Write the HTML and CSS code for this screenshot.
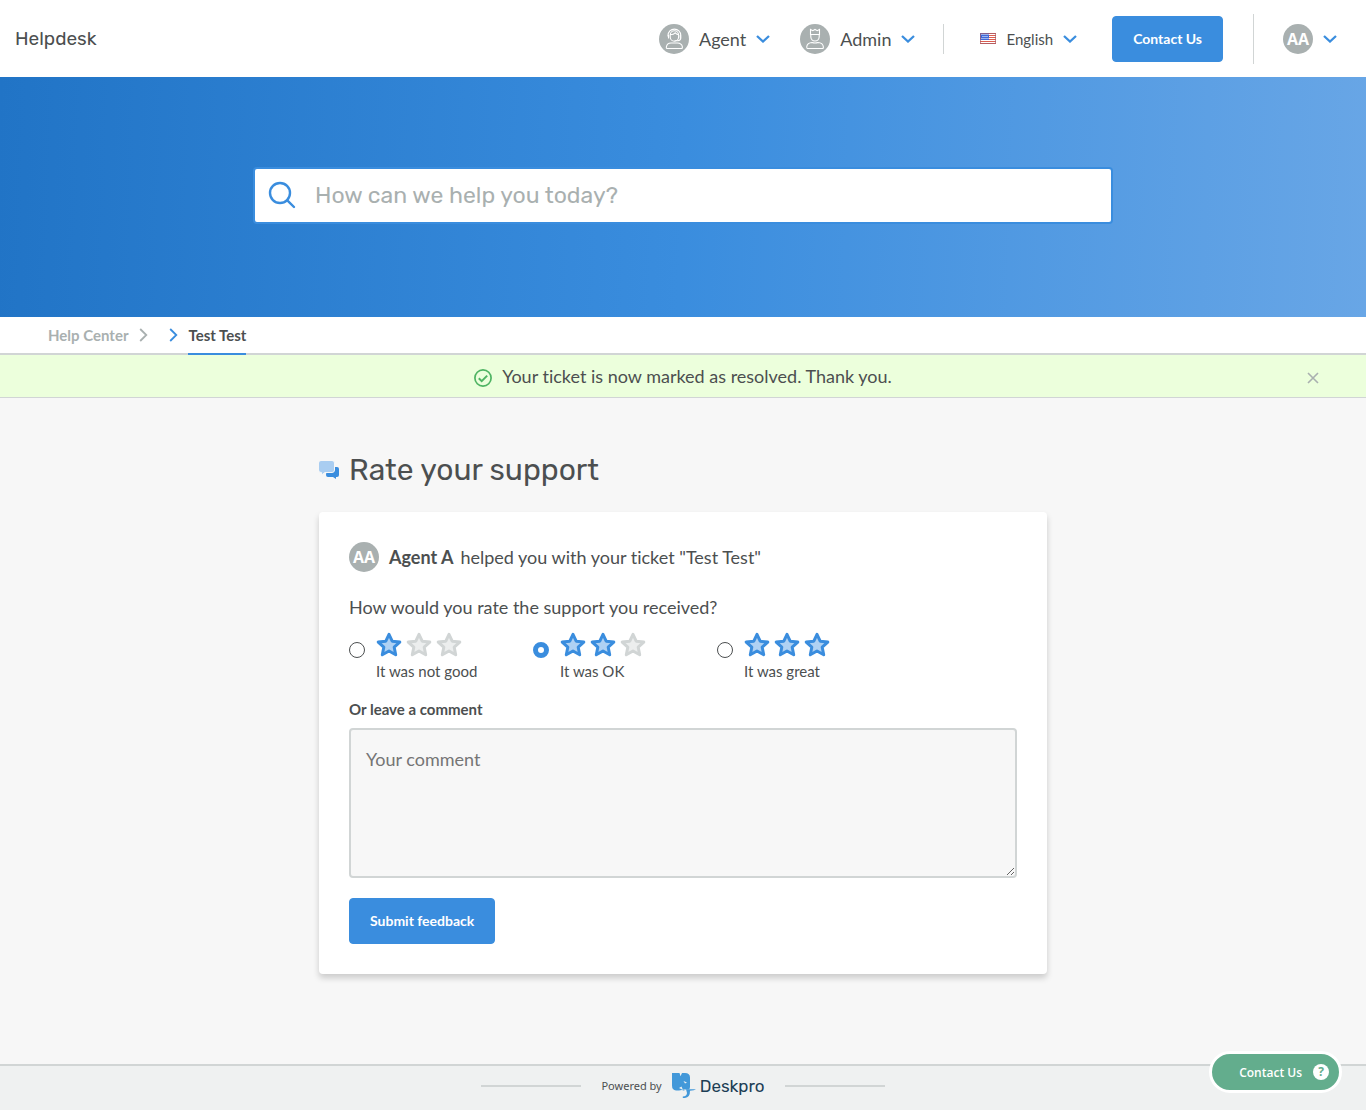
FILE: index.html
```html
<!DOCTYPE html>
<html lang="en">
<head>
<meta charset="utf-8">
<meta name="viewport" content="width=device-width, initial-scale=1">
<title>Helpdesk</title>
<link rel="stylesheet" href="styles.css">
</head>
<body>
<svg class="sprite" aria-hidden="true">
  <symbol id="chevron-down" viewBox="0 0 14 8"><path d="M1 1 7 6.500 13 1" fill="none" stroke="currentColor" stroke-width="2.300"/></symbol>
  <symbol id="chevron-right" viewBox="0 0 9 14"><path d="M1.200 1 7.300 7l-6.100 6" fill="none" stroke="currentColor" stroke-width="1.800"/></symbol>
  <symbol id="star" viewBox="0 0 26 26"><path d="M13 2.300 16.200 9.200l7.600.9-5.600 5.100 1.500 7.500L13 19l-6.700 3.700 1.500-7.500-5.600-5.100 7.600-.9z" stroke-width="3" stroke-linejoin="round"/></symbol>
</svg>

<header class="topbar">
  <a class="brand" href="#">Helpdesk</a>
  <nav class="menu">
    <button class="menu-item" type="button">
      <svg class="role-icon" viewBox="0 0 30 30" aria-hidden="true"><circle cx="15" cy="15" r="15" fill="#a9b0b0"/><g fill="none" stroke="#fff" stroke-width="1.100"><path d="M9 12.500V11.500a6.400 6.400 0 0 1 12.800 0V14q0 2.400-3 2.700h-3.300"/><path d="M11.200 13V11a4.200 4.200 0 0 1 8.400 0v2a4.200 4.200 0 0 1-8.400 0zM11.200 10.800q3.600-.300 5-2 1 1.500 3.400 2M9.500 11v3.500M21.300 11v3.500"/><path d="M12 19h6.500q4.200.300 4.800 3.500.2 2-.7 2H8q-1-.2-.5-2.200.7-3 4.500-3.300z"/></g></svg>
      <span>Agent</span>
      <svg class="chevron" aria-hidden="true"><use href="#chevron-down"/></svg>
    </button>
    <button class="menu-item menu-item-admin" type="button">
      <svg class="role-icon" viewBox="0 0 30 30" aria-hidden="true"><circle cx="15" cy="15" r="15" fill="#a9b0b0"/><g fill="none" stroke="#fff" stroke-width="1.100"><path d="M10.500 10.500V5.500l2.300 1.200L15 5.500l2.200 1.200 2.300-1.200v5zM10.800 10.500v2.300a4.200 4.200 0 0 0 8.400 0v-2.300"/><path d="M12 18.500q3 1 6 0 4.700.3 5.300 4 .2 2-.7 2H7.500q-1-.2-.7-2.200.7-3.500 5.200-3.800z"/></g></svg>
      <span>Admin</span>
      <svg class="chevron" aria-hidden="true"><use href="#chevron-down"/></svg>
    </button>
    <span class="divider"></span>
    <button class="menu-item language" type="button">
      <svg class="flag" viewBox="0 0 16 11" aria-hidden="true"><path fill="#fff" d="M0 0h16v11H0z"/><path d="M0 .5h16M0 2.500h16M0 4.500h16M0 6.500h16M0 8.500h16M0 10.500h16" stroke="#dc5e50"/><path fill="#3f68d8" d="M0 0h9v7H0z"/><path d="M1.500 1.500h7M2.500 3.500h6M1.500 5.500h7" stroke="#fff" stroke-dasharray="1 1"/><path fill="none" stroke="#a55d68" stroke-opacity=".7" d="M.5.5h15v10H.5z"/></svg>
      <span>English</span>
      <svg class="chevron" aria-hidden="true"><use href="#chevron-down"/></svg>
    </button>
    <button class="button contact" type="button">Contact Us</button>
    <span class="divider divider-tall"></span>
    <button class="menu-item account" type="button">
      <span class="avatar">AA</span>
      <svg class="chevron" aria-hidden="true"><use href="#chevron-down"/></svg>
    </button>
  </nav>
</header>

<section class="hero">
  <form class="search" role="search">
    <svg class="search-icon" viewBox="0 0 28 28" aria-hidden="true"><g fill="none" stroke="#3a8dde" stroke-width="2.400" stroke-linecap="round"><circle cx="12" cy="12" r="10"/><path d="m19.300 19.300 6.700 6.700"/></g></svg>
    <input class="search-input" type="search" placeholder="How can we help you today?" aria-label="Search">
  </form>
</section>

<nav class="breadcrumbs" aria-label="Breadcrumb">
  <a class="crumb" href="#">Help Center</a>
  <svg class="crumb-arrow" aria-hidden="true"><use href="#chevron-right"/></svg>
  <svg class="crumb-arrow crumb-arrow-active" aria-hidden="true"><use href="#chevron-right"/></svg>
  <a class="crumb crumb-active" href="#" aria-current="page">Test Test</a>
</nav>

<div class="notice" role="status">
  <svg class="notice-icon" viewBox="0 0 18 18" aria-hidden="true"><g fill="none" stroke="#4fb463" stroke-width="1.700"><circle cx="9" cy="9" r="8.100"/><path stroke-width="2" d="m4.800 9.200 2.900 2.900 5.500-5.500"/></g></svg>
  <p class="notice-text">Your ticket is now marked as resolved. Thank you.</p>
  <button class="notice-close" type="button" aria-label="Dismiss"><svg viewBox="0 0 12 12" aria-hidden="true"><path d="m1 1 10 10M11 1 1 11" stroke="#a9b0b0" stroke-width="1.600"/></svg></button>
</div>

<main class="content">
  <h1 class="title">
    <svg class="title-icon" viewBox="0 0 20 18" aria-hidden="true"><path fill="#3a8dde" d="M8 6h10q2 0 2 2v6q0 2-2 2h-1v2l-3-2H9q-2 0-2-2z"/><path fill="#a9cdf1" stroke="#f7f7f7" d="M2-.5h11q2.500 0 2.500 2.500v7q0 2.500-2.500 2.500H6L2.500 14v-2.500H2Q-.5 11.500-.5 9V2Q-.5-.5 2-.5z"/></svg>
    Rate your support
  </h1>
  <form class="card">
    <p class="helper"><span class="avatar">AA</span><strong>Agent A</strong><span>helped you with your ticket "Test Test"</span></p>
    <fieldset class="rating">
      <legend class="question">How would you rate the support you received?</legend>
      <div class="options">
        <label class="option">
          <input class="radio" type="radio" name="rating">
          <span class="option-body"><span class="stars"><svg class="star star-on"><use href="#star"/></svg><svg class="star"><use href="#star"/></svg><svg class="star"><use href="#star"/></svg></span>It was not good</span>
        </label>
        <label class="option">
          <input class="radio" type="radio" name="rating" checked>
          <span class="option-body"><span class="stars"><svg class="star star-on"><use href="#star"/></svg><svg class="star star-on"><use href="#star"/></svg><svg class="star"><use href="#star"/></svg></span>It was OK</span>
        </label>
        <label class="option">
          <input class="radio" type="radio" name="rating">
          <span class="option-body"><span class="stars"><svg class="star star-on"><use href="#star"/></svg><svg class="star star-on"><use href="#star"/></svg><svg class="star star-on"><use href="#star"/></svg></span>It was great</span>
        </label>
      </div>
    </fieldset>
    <label class="comment-label" for="comment">Or leave a comment</label>
    <textarea class="comment" id="comment" placeholder="Your comment"></textarea>
    <button class="button" type="submit">Submit feedback</button>
  </form>
</main>

<footer class="footer">
  <span class="rule"></span>
  <a class="powered" href="#">
    <span class="powered-text">Powered by</span>
    <svg class="logo" viewBox="0 0 24 26" aria-hidden="true"><path fill="#4298d9" d="M0 0h7.500l1 3.200L10 0h3q5 0 5 4.500V14q0 2-1.500 2.500H11l2 1.500-3-1-3 .500H4q-4-.500-4-5z"/><path fill="#eff1f1" d="m11.500 8 3.500 1.500-2 1zM7 15l2.500-1.500L11 17z"/><path fill="#4298d9" d="M14 16.200h10q-1.500 1.300-6 1.600.200 6.700-5.200 7.200h-2v-1.400q4.200-.600 4.200-3.600z"/></svg>
    <span class="logo-text">Deskpro</span>
  </a>
  <span class="rule"></span>
</footer>

<button class="chat" type="button">Contact Us <span class="chat-mark">?</span></button>
</body>
</html>
```
FILE: styles.css
```css
* {
  box-sizing: border-box;
}

body {
  margin: 0;
  min-height: 100vh;
  display: flex;
  flex-direction: column;
  background: #f7f7f7;
  color: #4c4f50;
  font-family: Lato, sans-serif;
  font-size: 18px;
  font-variant-ligatures: none;
  line-height: 24px;
}

button,
input,
textarea {
  font-family: inherit;
}

button {
  cursor: pointer;
}

a {
  color: inherit;
  text-decoration: none;
}

p {
  margin: 0;
}

.sprite {
  display: none;
}

.topbar {
  height: 77px;
  padding: 0 29px 0 15px;
  display: flex;
  align-items: center;
  justify-content: space-between;
  background: #fff;
}

.brand {
  font-family: Rubik, Roboto, sans-serif;
  font-size: 19px;
}

.menu {
  display: flex;
  align-items: center;
}

.menu-item {
  display: flex;
  align-items: center;
  gap: 10px;
  padding: 0;
  border: 0;
  background: none;
  color: inherit;
  font-size: 18px;
  line-height: 24px;
}

.menu-item-admin {
  margin-left: 30px;
}

.role-icon {
  width: 30px;
  height: 30px;
}

.chevron {
  width: 14px;
  height: 8px;
  color: #3a8dde;
}

.divider {
  width: 1px;
  height: 30px;
  margin: 0 36px 0 28px;
  background: #d1d5d5;
}

.divider-tall {
  height: 50px;
  margin: 0 29px 0 30px;
}

.language {
  font-size: 15px;
}

.flag {
  width: 16px;
  height: 11px;
}

.avatar {
  width: 30px;
  height: 30px;
  border-radius: 50%;
  background: #a9b0b0;
  color: #fff;
  font-family: "Open Sans", sans-serif;
  font-size: 16px;
  font-weight: 700;
  line-height: 30px;
  text-align: center;
}

.button {
  height: 46px;
  padding: 0 20px 1px;
  border: 1px solid #3a8dde;
  border-radius: 4px;
  background: #3a8dde;
  color: #fff;
  font-size: 14px;
  font-weight: 700;
}

.contact {
  margin-left: 35px;
}

.hero {
  height: 240px;
  padding: 0 15px 4px;
  display: flex;
  align-items: center;
  justify-content: center;
  background: linear-gradient(92deg, #2174c6 0%, #3a8dde 50%, #68a6e6 100%);
}

.search {
  width: 100%;
  max-width: 860px;
  height: 57px;
  padding: 0 13px;
  display: flex;
  align-items: center;
  gap: 19px;
  border: 2px solid #3a8dde;
  border-radius: 4px;
  background: #fff;
}

.search-icon {
  width: 28px;
  height: 28px;
  flex: none;
}

.search-input {
  flex: 1;
  min-width: 0;
  padding: 0;
  border: 0;
  outline: 0;
  appearance: none;
  background: none;
  font-family: Rubik, Roboto, sans-serif;
  font-size: 23px;
}

.search-input::placeholder {
  color: #a9b0b0;
}

.breadcrumbs {
  height: 38px;
  padding: 0 48px;
  display: flex;
  border-bottom: 2px solid #d1d5d5;
  background: #fff;
  color: #a9b0b0;
  font-size: 15px;
  font-weight: 700;
}

.crumb {
  height: 38px;
  line-height: 36px;
}

.crumb-active {
  border-bottom: 2px solid #3a8dde;
  color: #4c4f50;
}

.crumb-arrow {
  width: 9px;
  height: 14px;
  margin: 11px 10px 11px 11px;
}

.crumb-arrow-active {
  color: #3a8dde;
}

.notice {
  height: 43px;
  padding: 0 46px;
  display: grid;
  grid-template-columns: 1fr auto auto 1fr;
  align-items: center;
  gap: 10px;
  border-bottom: 1px solid #d1d5d5;
  background: #ecffdc;
}

.notice-icon {
  width: 18px;
  height: 18px;
  margin-top: 3px;
  grid-column: 2;
}

.notice-close {
  width: 14px;
  height: 14px;
  margin-top: 3px;
  padding: 1px;
  border: 0;
  background: none;
  justify-self: end;
}

.notice-close svg {
  display: block;
}

.content {
  width: 100%;
  max-width: 728px;
  margin: 0 auto;
  padding: 50px 0 90px;
}

.title {
  margin: 0 0 20px;
  display: flex;
  align-items: center;
  gap: 10px;
  font-family: Rubik, Roboto, sans-serif;
  font-size: 30px;
  font-weight: 400;
  line-height: 44px;
}

.title-icon {
  width: 20px;
  height: 18px;
}

.card {
  padding: 30px;
  border-radius: 4px;
  background: #fff;
  box-shadow: 0 4px 6px rgba(0, 0, 0, 0.18);
}

.helper {
  display: flex;
  align-items: center;
}

.helper strong {
  margin: 0 7px 0 10px;
}

.rating {
  margin: 23px 0 0;
  padding: 0;
  border: 0;
}

.question {
  padding: 0;
}

.options {
  margin-top: 13px;
  display: grid;
  grid-template-columns: repeat(3, 184px);
}

.option {
  display: flex;
  gap: 11px;
  font-size: 15px;
}

.radio {
  width: 16px;
  height: 16px;
  margin: 10px 0 0;
  appearance: none;
  border: 1px solid #4c4f50;
  border-radius: 50%;
  background: #fff;
}

.radio:checked {
  border: 5px solid #3a8dde;
}

.stars {
  height: 27px;
  display: flex;
  gap: 4px;
}

.star {
  width: 26px;
  height: 26px;
  fill: #eceeee;
  stroke: #d1d5d5;
}

.star-on {
  fill: #afd1f3;
  stroke: #3a8dde;
}

.comment-label {
  margin: 14px 0 7px;
  display: block;
  font-size: 15px;
  font-weight: 700;
}

.comment {
  width: 100%;
  height: 150px;
  margin: 0 0 20px;
  padding: 17px 15px;
  display: block;
  border: 2px solid #d1d5d5;
  border-radius: 4px;
  outline: 0;
  background: #f7f7f7;
  font-size: 18px;
  line-height: 24px;
}

.footer {
  flex: 1;
  padding: 5px 0;
  display: flex;
  align-items: flex-start;
  justify-content: center;
  gap: 20px;
  border-top: 2px solid #d1d5d5;
  background: #eff1f1;
}

.rule {
  width: 100px;
  height: 2px;
  margin-top: 14px;
  background: #d1d5d5;
}

.powered {
  height: 30px;
  display: flex;
  align-items: center;
}

.powered-text {
  margin-right: 10px;
  font-family: "Noto Sans", sans-serif;
  font-size: 11px;
}

.logo {
  width: 24px;
  height: 26px;
  margin-right: 4px;
}

.logo-text {
  color: #1c3e55;
  font-family: Rubik, Roboto, sans-serif;
  font-size: 17px;
}

.chat {
  position: fixed;
  right: 24px;
  bottom: 17px;
  height: 42px;
  padding: 0 10px 0 27px;
  display: flex;
  align-items: center;
  gap: 11px;
  border: 3px solid #fff;
  border-radius: 21px;
  background: #63ad8d;
  color: #fff;
  font-family: "Open Sans", sans-serif;
  font-size: 12px;
  font-weight: 600;
}

.chat-mark {
  width: 16px;
  height: 16px;
  border-radius: 50%;
  background: #fff;
  color: #63ad8d;
  font-weight: 700;
  line-height: 16px;
}
```
